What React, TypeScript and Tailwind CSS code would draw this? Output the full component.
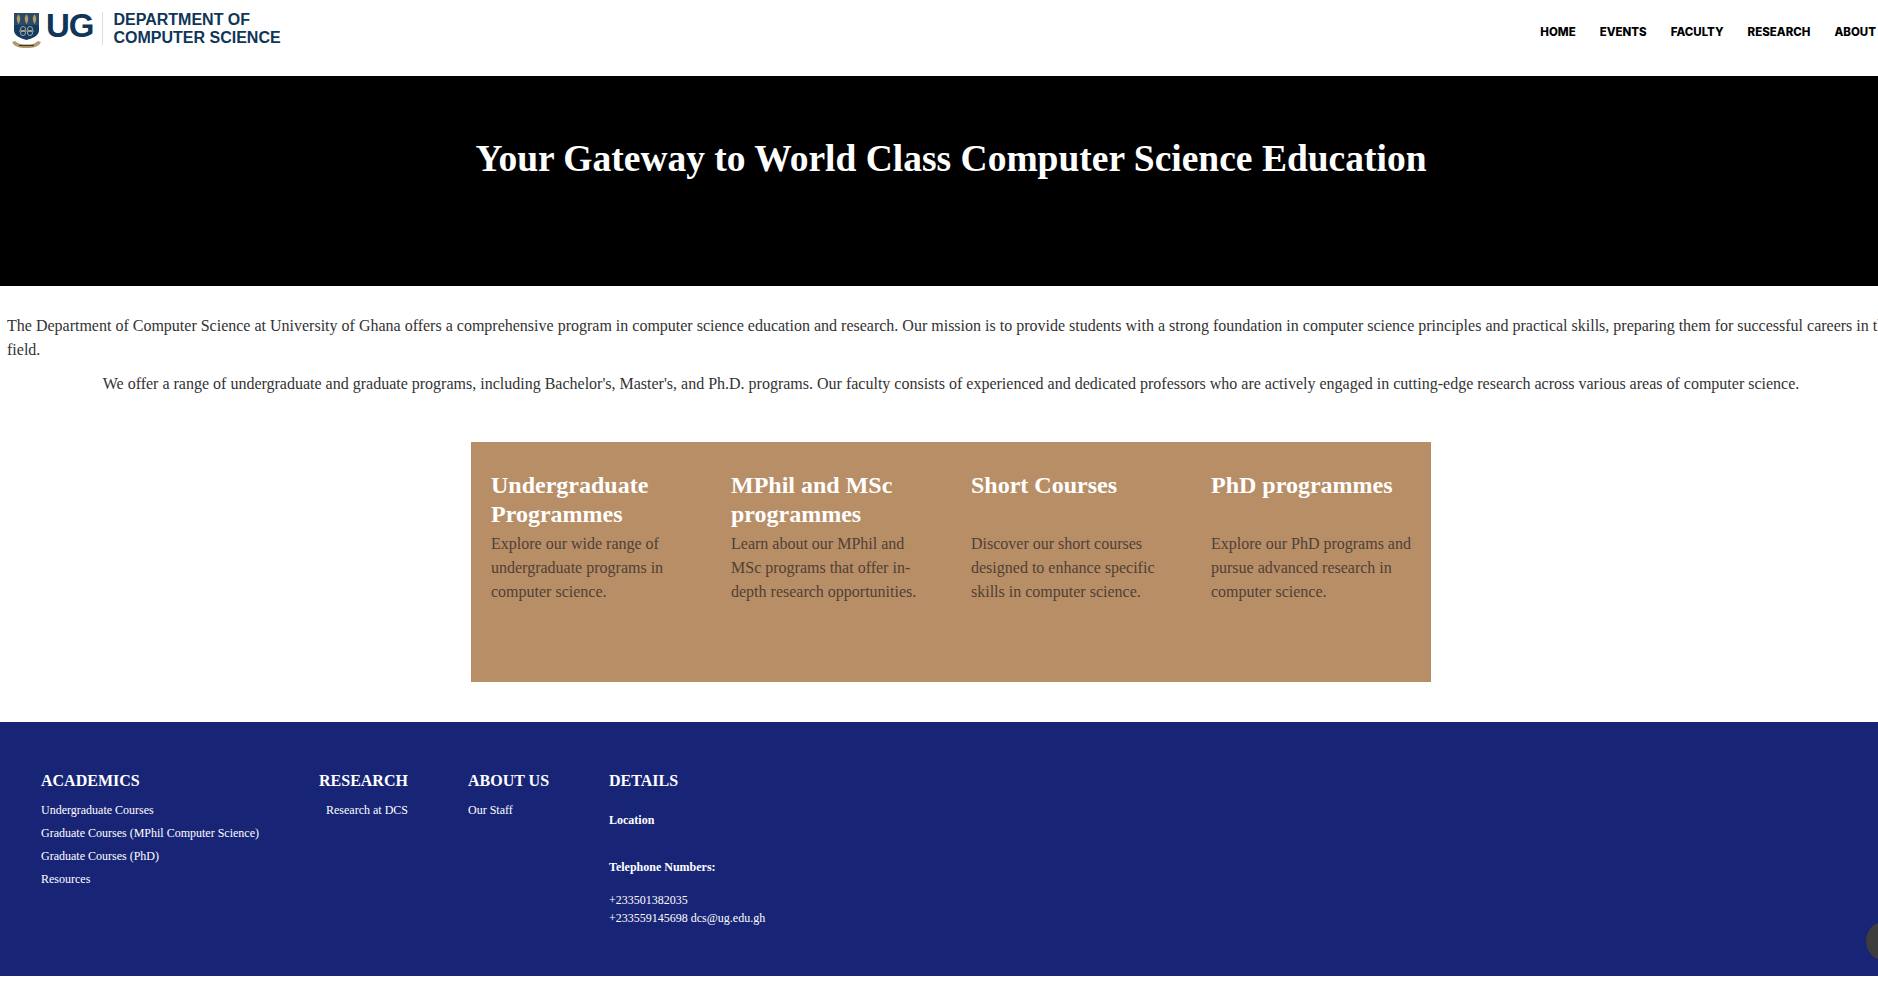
const serif = "font-['Liberation_Serif',serif]";

function Crest() {
  return (
    <svg width="30" height="37" viewBox="0 0 30 37" className="shrink-0">
      <path d="M2 1h25v17c0 6-6 8-12.500 10C8 26 2 24 2 18z" fill="#123a63" />
      <rect x="2" y="1" width="25" height="12" fill="#2c4a66" />
      <g fill="#b49a68">
        <path d="M6.500 2.500c2 2 2.500 6 0 9.500-2.500-3.500-2-7.500 0-9.500z" />
        <path d="M14.500 2.500c2 2 2.500 6 0 9.500-2.500-3.500-2-7.500 0-9.500z" />
        <path d="M22.500 2.500c2 2 2.500 6 0 9.500-2.500-3.500-2-7.500 0-9.500z" />
      </g>
      <g fill="none" stroke="#a9a796" strokeWidth="1">
        <circle cx="11" cy="17" r="2.500" />
        <circle cx="18" cy="17" r="2.500" />
        <circle cx="11" cy="21" r="2.500" />
        <circle cx="18" cy="21" r="2.500" />
        <path d="M7 19h15" />
      </g>
      <path d="M0 30l3-1c3 3 7 3.500 11.500 3.500S23 32 26 29l3 1-2 3c-3 2.500-8 3-12.500 3S5 35.500 2 33z" fill="#b39b70" />
      <path d="M7 33.500h15" stroke="#3f3a2a" strokeWidth="1.200" />
    </svg>
  );
}

function Program({ title, text }: { title: string; text: string }) {
  return (
    <div className="w-[240px] px-5 pt-[29px]">
      <h3 className="min-h-[61px] text-[24px] leading-[28.800px] font-bold text-white">{title}</h3>
      <p className="text-[16px] leading-[24px] text-[#4f4036]">{text}</p>
    </div>
  );
}

function FooterHead({ children }: { children: React.ReactNode }) {
  return <h4 className="mb-3 text-[16px] leading-[18px] font-bold text-white">{children}</h4>;
}

function FooterLinks({ items, className = "" }: { items: string[]; className?: string }) {
  return (
    <ul className={`flex flex-col gap-[7px] text-[12px] leading-[16px] text-white ${className}`}>
      {items.map((item) => (
        <li key={item}>{item}</li>
      ))}
    </ul>
  );
}

export default function App() {
  return (
    <div className={`relative h-[997px] w-[1878px] overflow-hidden bg-white ${serif}`}>
      <div className="w-[1902px]">
        <header className="flex h-[76px] items-start justify-between bg-white">
          <div className="flex items-start pl-3 pt-3 font-['Liberation_Sans',sans-serif] text-[#0f3558]">
            <Crest />
            <span className="ml-1 text-[33px] leading-[28px] font-bold tracking-[-1px]">UG</span>
            <span className="ml-[8px] h-[33px] w-px bg-[#e4dcd2]" />
            <span className="ml-[11px] -mt-px text-[16px] leading-[18px] font-bold">
              DEPARTMENT OF
              <br />
              COMPUTER SCIENCE
            </span>
          </div>
          <nav className="flex gap-6 pt-[24px] pr-[26px] font-['Inter',sans-serif] text-[11.500px] leading-[16px] font-extrabold text-black">
            <span>HOME</span>
            <span>EVENTS</span>
            <span>FACULTY</span>
            <span>RESEARCH</span>
            <span>ABOUT</span>
          </nav>
        </header>

        <section className="h-[210px] bg-black pt-[60px] text-center">
          <h1 className="text-[37.500px] leading-[46px] font-bold text-white">
            Your Gateway to World Class Computer Science Education
          </h1>
        </section>

        <section className="px-[7px] pt-[28px] text-[16px] leading-[24px] text-[#333333]">
          <p>
            The Department of Computer Science at University of Ghana offers a comprehensive program in computer
            science education and research. Our mission is to provide students with a strong foundation in computer
            science principles and practical skills, preparing them for successful careers in the field.
          </p>
          <p className="mt-[10px] text-center">
            We offer a range of undergraduate and graduate programs, including Bachelor's, Master's, and Ph.D. programs.
            Our faculty consists of experienced and dedicated professors who are actively engaged in cutting-edge
            research across various areas of computer science.
          </p>
        </section>

        <section className="mx-auto mt-[46px] flex h-[240px] w-[960px] bg-[#b88e66]">
          <Program
            title="Undergraduate Programmes"
            text="Explore our wide range of undergraduate programs in computer science."
          />
          <Program
            title="MPhil and MSc programmes"
            text="Learn about our MPhil and MSc programs that offer in-depth research opportunities."
          />
          <Program
            title="Short Courses"
            text="Discover our short courses designed to enhance specific skills in computer science."
          />
          <Program
            title="PhD programmes"
            text="Explore our PhD programs and pursue advanced research in computer science."
          />
        </section>

        <footer className="mt-[40px] flex h-[254px] bg-[#182577] pl-[41px] pt-[50px]">
          <div className="w-[278px]">
            <FooterHead>ACADEMICS</FooterHead>
            <FooterLinks
              items={[
                "Undergraduate Courses",
                "Graduate Courses (MPhil Computer Science)",
                "Graduate Courses (PhD)",
                "Resources",
              ]}
            />
          </div>
          <div className="w-[149px]">
            <FooterHead>RESEARCH</FooterHead>
            <FooterLinks items={["Research at DCS"]} className="pl-[7px]" />
          </div>
          <div className="w-[141px]">
            <FooterHead>ABOUT US</FooterHead>
            <FooterLinks items={["Our Staff"]} />
          </div>
          <div className="text-[12px] leading-[18px] text-white">
            <FooterHead>DETAILS</FooterHead>
            <p className="mt-[21px] font-bold">Location</p>
            <p className="mt-[29px] font-bold">Telephone Numbers:</p>
            <p className="mt-[15px]">+233501382035</p>
            <p>+233559145698 dcs@ug.edu.gh</p>
          </div>
        </footer>
      </div>
      <div className="absolute top-[921px] left-[1866px] h-[40px] w-[40px] rounded-full bg-[#3d3d3d]" />
    </div>
  );
}
